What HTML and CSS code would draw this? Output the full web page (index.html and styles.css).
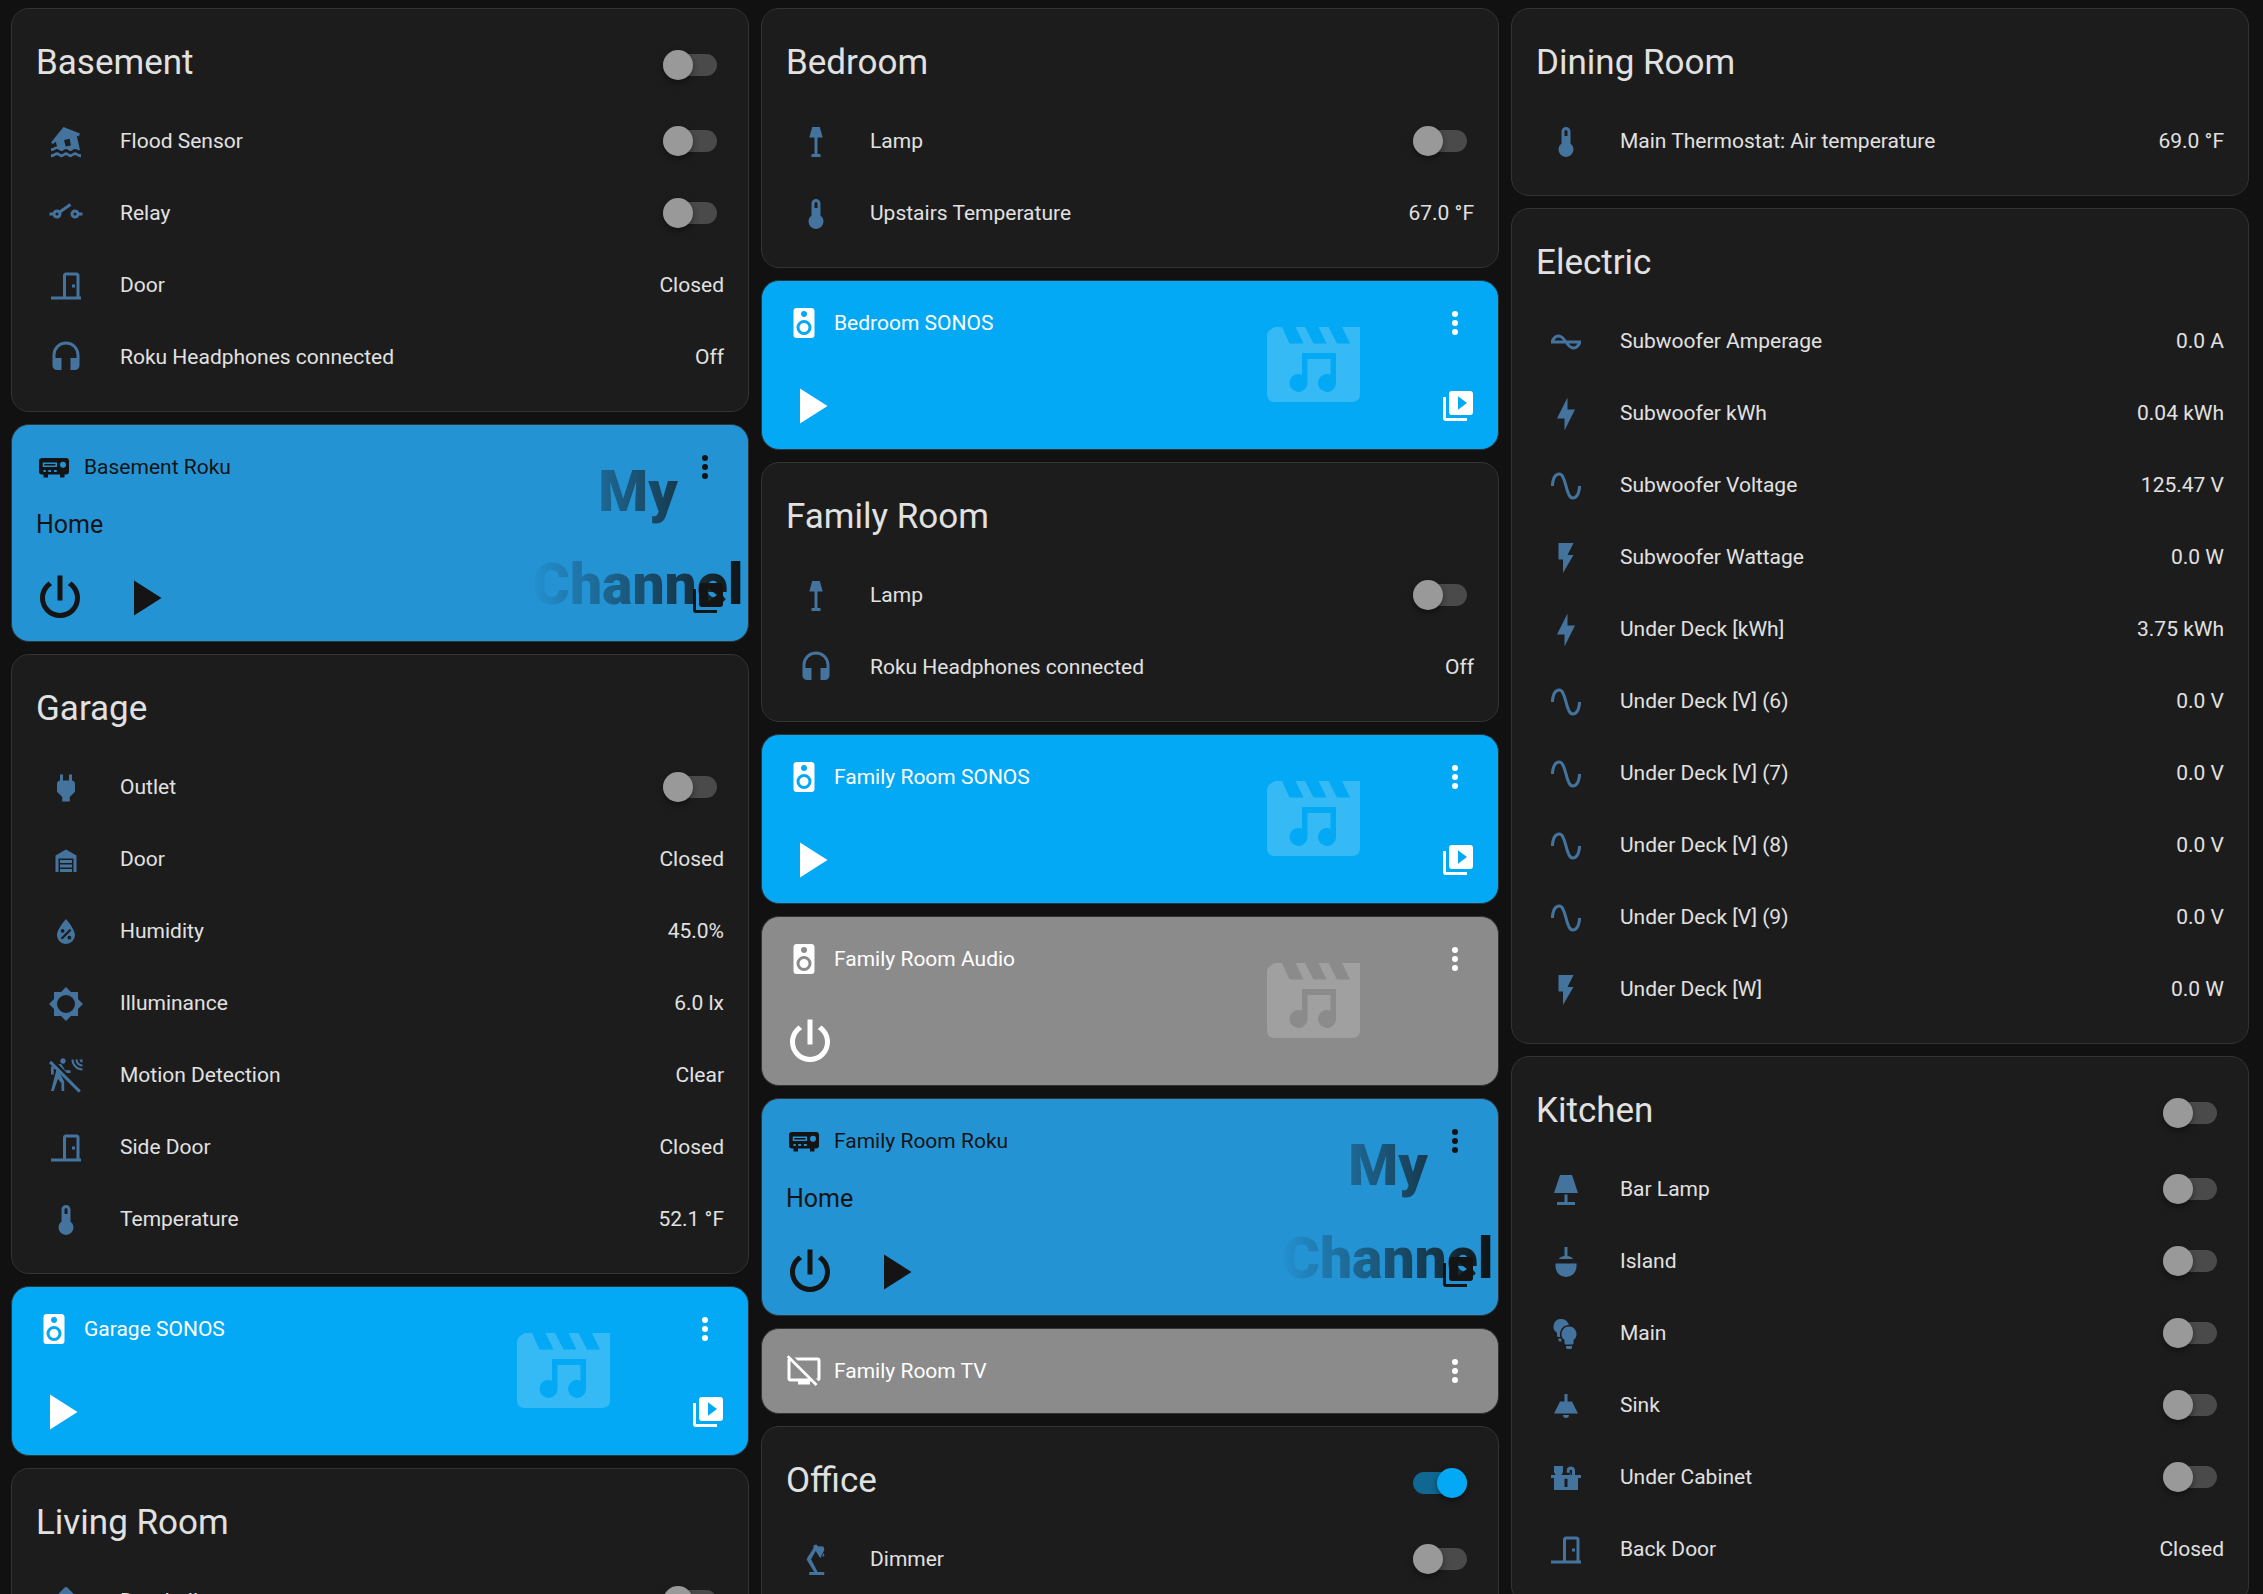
FILE: index.html
```html
<!DOCTYPE html>
<html lang="en">
<head>
<meta charset="utf-8">
<meta name="viewport" content="width=device-width, initial-scale=1">
<title>Overview</title>
<link rel="stylesheet" href="styles.css">
</head>
<body>
<svg class="sprite" aria-hidden="true">
  <symbol id="flood" viewBox="0 0 24 24"><path fill-rule="evenodd" d="M10.3 2L21.3 6.3L20.6 8.4L19.2 7.9L21.3 17.3C20.2 18 19.2 16.7 18 16.7S16 18 15 18S13 16.7 12 16.7S10 18 9 18S7 16.7 6 16.7S4 18.2 2 18V16.2C3.5 16.2 4.5 15 6 15L5.2 11.9L3.2 13.3L2 12.3ZM10.7 10.6L11.8 15L15.3 14.4L14.4 9.8Z"/><path d="M2 20.2C4 20.2 4.5 18.9 6 18.9S8 20.2 9 20.2S11 18.9 12 18.9S14 20.2 15 20.2S17 18.9 18 18.9S20 20.2 22 20.2V22.2C20 22.2 19.500 20.900 18 20.900S16 22.200 15 22.200S13 20.900 12 20.900S10 22.200 9 22.200S7 20.900 6 20.900S4 22.200 2 22.200Z"/></symbol>
  <symbol id="relay" viewBox="0 0 24 24"><path d="M1,11H3.17C3.58,9.83 4.69,9 6,9C6.65,9 7.25,9.21 7.74,9.56L14.44,4.87L15.58,6.5L8.89,11.2C8.96,11.45 9,11.72 9,12A3,3 0 0,1 6,15C4.69,15 3.58,14.17 3.17,13H1V11M23,11V13H20.83C20.42,14.17 19.31,15 18,15A3,3 0 0,1 15,12A3,3 0 0,1 18,9C19.31,9 20.42,9.83 20.83,11H23M6,11A1,1 0 0,0 5,12A1,1 0 0,0 6,13A1,1 0 0,0 7,12A1,1 0 0,0 6,11M18,11A1,1 0 0,0 17,12A1,1 0 0,0 18,13A1,1 0 0,0 19,12A1,1 0 0,0 18,11Z"/></symbol>
  <symbol id="door" viewBox="0 0 24 24"><path d="M16,11H18V13H16V11M12,3H19C20.11,3 21,3.89 21,5V19H22V21H2V19H10V5C10,3.89 10.89,3 12,3M12,5V19H19V5H12Z"/></symbol>
  <symbol id="headphones" viewBox="0 0 24 24"><path d="M12,1C7,1 3,5 3,10V17A3,3 0 0,0 6,20H9V12H5V10A7,7 0 0,1 12,3A7,7 0 0,1 19,10V12H15V20H18A3,3 0 0,0 21,17V10C21,5 16.97,1 12,1Z"/></symbol>
  <symbol id="plug" viewBox="0 0 24 24"><path d="M16,7V3H14V7H10V3H8V7H8C7,7 6,8 6,9V14.5L9.5,18V21H14.5V18L18,14.5V9C18,8 17,7 16,7Z"/></symbol>
  <symbol id="garage" viewBox="0 0 24 24"><path d="M19,20H17V11H7V20H5V9L12,5L19,9V20M8,12H16V14H8V12M8,15H16V17H8V15M16,18V20H8V18H16Z"/></symbol>
  <symbol id="humidity" viewBox="0 0 24 24"><path fill-rule="evenodd" d="M12,3.25C12,3.25 6,10 6,14C6,17.32 8.69,20 12,20A6,6 0 0,0 18,14C18,10 12,3.25 12,3.25M14.47,9.97L15.53,11.03L9.53,17.03L8.47,15.97M9.75,10A1.25,1.25 0 0,1 11,11.25A1.25,1.25 0 0,1 9.75,12.5A1.25,1.25 0 0,1 8.5,11.25A1.25,1.25 0 0,1 9.75,10M14.25,14.5A1.25,1.25 0 0,1 15.5,15.75A1.25,1.25 0 0,1 14.25,17A1.25,1.25 0 0,1 13,15.75A1.25,1.25 0 0,1 14.25,14.5Z"/></symbol>
  <symbol id="brightness" viewBox="0 0 24 24"><path d="M12,18A6,6 0 0,1 6,12A6,6 0 0,1 12,6A6,6 0 0,1 18,12A6,6 0 0,1 12,18M20,15.31L23.31,12L20,8.69V4H15.31L12,0.69L8.69,4H4V8.69L0.69,12L4,15.31V20H8.69L12,23.31L15.31,20H20V15.31Z"/></symbol>
  <symbol id="motion-off" viewBox="0 0 24 24"><path d="M10,0.2C9,0.2 8.2,1 8.2,2C8.2,3 9,3.8 10,3.8C11,3.8 11.8,3 11.8,2C11.8,1 11,0.2 10,0.2M15.67,1A7.33,7.33 0 0,0 23,8.33V7A6,6 0 0,1 17,1H15.67M18.33,1C18.33,3.58 20.42,5.67 23,5.67V4.33C21.16,4.33 19.67,2.84 19.67,1H18.33M21,1A2,2 0 0,0 23,3V1H21M7.92,4.03C7.75,4.03 7.58,4.06 7.42,4.11L2,5.8V11H3.8V7.33L5.91,6.67L2,22H3.8L6.67,13.89L9,17V22H10.8V15.59L8.31,11.05L9.04,8.18L10.12,10H15V8.2H11.38L9.38,4.87C9.08,4.37 8.54,4.03 7.92,4.03Z"/><path class="knockout" d="M3.400 2.200L22.600 21.400"/><path class="slash" d="M1.400 2.600L21.200 22.400"/></symbol>
  <symbol id="thermometer" viewBox="0 0 24 24"><path d="M15 13V5A3 3 0 0 0 9 5V13A5 5 0 1 0 15 13M12 4A1 1 0 0 1 13 5V8H11V5A1 1 0 0 1 12 4Z"/></symbol>
  <symbol id="floor-lamp" viewBox="0 0 24 24"><path d="M9.500 2H14.500L16.500 9H13V20H15V22H9V20H11V9H7.500Z"/></symbol>
  <symbol id="home" viewBox="0 0 24 24"><path d="M11.100 2.400Q12 1.600 12.900 2.400L22 11.500V13H20V20Q20 22 18 22H6Q4 22 4 20V13H2V11.500Z"/></symbol>
  <symbol id="current" viewBox="0 0 24 24"><path d="M12.43 11C12.28 10.84 10 7 7 7S2.32 10.18 2 11V13H11.57C11.72 13.16 14 17 17 17S21.68 13.82 22 13V11H12.43M7 9C8.17 9 9.18 9.85 10 11H4.31C4.78 10.17 5.54 9 7 9M17 15C15.83 15 14.82 14.15 14 13H19.69C19.22 13.83 18.46 15 17 15Z"/></symbol>
  <symbol id="bolt" viewBox="0 0 24 24"><path d="M11 15H6L13 1V9H18L11 23V15Z"/></symbol>
  <symbol id="sine" viewBox="0 0 24 24"><path d="M16.5,21C13.5,21 12.31,16.76 11.05,12.28C10.14,9.04 9,5 7.5,5C4.11,5 4,11.93 4,12H2C2,11.63 2.06,3 7.5,3C10.5,3 11.71,7.25 12.97,11.74C13.83,14.8 15,19 16.5,19C19.94,19 20.03,12.07 20.03,12H22.03C22.03,12.37 21.97,21 16.5,21Z"/></symbol>
  <symbol id="flash" viewBox="0 0 24 24"><path d="M7,2V13H10V22L17,10H13L17,2H7Z"/></symbol>
  <symbol id="lamp" viewBox="0 0 24 24"><path d="M8,2H16L20,14H4L8,2M11,15H13V20H18V22H6V20H11V15Z"/></symbol>
  <symbol id="pendant" viewBox="0 0 24 24"><path d="M11 2H13V8C14.500 8.100 16.200 8.800 16.700 10H7.300C7.800 8.800 9.500 8.100 11 8ZM5 13H19V15A7 7 0 0 1 5 15Z"/></symbol>
  <symbol id="bulbs" viewBox="0 0 24 24"><path d="M9 2A5 5 0 0 0 6 11.200V13Q6 14 7 14H9L14 7A5 5 0 0 0 9 2M7 15H9V17H8Q7 17 7 16Z"/><path class="ring" d="M14 7A5 5 0 0 1 17 16V18Q17 19 16 19H12Q11 19 11 18V16A5 5 0 0 1 14 7M12 20H16V21Q16 22 15 22H13Q12 22 12 21Z"/></symbol>
  <symbol id="ceiling" viewBox="0 0 24 24"><path d="M8,9H11V4H13V9H16L20,17H4L8,9M14,18A2,2 0 0,1 12,20A2,2 0 0,1 10,18H14Z"/></symbol>
  <symbol id="counter" viewBox="0 0 24 24"><path fill-rule="evenodd" d="M4 4H10V8L9 10H14.500V8.500H12.500V7A2.700 2.700 0 0 1 18 7V10H22V12H20V20H4V12H2V10H5L4 8ZM16 7A.8 .8 0 0 0 14.500 7V8.500H15V10H16ZM11 12.500V18H13V12.500Z"/></symbol>
  <symbol id="desk-lamp" viewBox="0 0 24 24"><path d="M10.400 2.200L12.300 1.700L13.200 2.800L17 3L17.600 5.200L14.800 10.900L11.800 6L8.700 11.500L13.100 20H17.500V22H7.500V20H10.800L6.500 13Q5.200 11.700 6.300 10.400L10.200 4.300ZM17.200 7.200L17.600 9L15.800 10.300Z"/></symbol>
  <symbol id="roku" viewBox="0 0 24 24"><path fill-rule="evenodd" d="M4 6H20A2 2 0 0 1 22 8V15A2 2 0 0 1 20 17H19V19H16V17H8V19H5V17H4A2 2 0 0 1 2 15V8A2 2 0 0 1 4 6M4.500 9V12H14V9ZM5.500 10H13V11H5.500ZM18 8.500A2 2 0 0 0 18 12.500A2 2 0 0 0 18 8.500M5 14V15.300H6.500V14ZM8.200 14V15.300H10V14ZM12 14V15.300H13.800V14Z"/></symbol>
  <symbol id="speaker" viewBox="0 0 24 24"><path d="M12,12A3,3 0 0,0 9,15A3,3 0 0,0 12,18A3,3 0 0,0 15,15A3,3 0 0,0 12,12M12,20A5,5 0 0,1 7,15A5,5 0 0,1 12,10A5,5 0 0,1 17,15A5,5 0 0,1 12,20M12,4A2,2 0 0,1 14,6A2,2 0 0,1 12,8C10.89,8 10,7.1 10,6C10,4.89 10.89,4 12,4M17,2H7C5.89,2 5,2.89 5,4V20A2,2 0 0,0 7,22H17A2,2 0 0,0 19,20V4C19,2.89 18.1,2 17,2Z"/></symbol>
  <symbol id="tv-off" viewBox="0 0 24 24"><path d="M0.5,2.77L1.78,1.5L21,20.72L19.73,22L16.73,19H16V21H8V19H3A2,2 0 0,1 1,17V5C1,4.5 1.17,4.07 1.46,3.73L0.5,2.77M21,17V5H7.82L5.82,3H21A2,2 0 0,1 23,5V17C23,17.85 22.45,18.59 21.7,18.87L19.82,17H21M3,17H14.73L3,5.27V17Z"/></symbol>
  <symbol id="dots" viewBox="0 0 24 24"><path d="M12,16A2,2 0 0,1 14,18A2,2 0 0,1 12,20A2,2 0 0,1 10,18A2,2 0 0,1 12,16M12,10A2,2 0 0,1 14,12A2,2 0 0,1 12,14A2,2 0 0,1 10,12A2,2 0 0,1 12,10M12,4A2,2 0 0,1 14,6A2,2 0 0,1 12,8A2,2 0 0,1 10,6A2,2 0 0,1 12,4Z"/></symbol>
  <symbol id="play" viewBox="0 0 24 24"><path d="M8,5.14V19.14L19,12.14V5.14Z M8,5.14L19,12.14Z" fill="none"/><path d="M8,5V19L19,12Z"/></symbol>
  <symbol id="power" viewBox="0 0 24 24"><path d="M16.56,5.44L15.11,6.89C16.84,7.94 18,9.83 18,12A6,6 0 0,1 12,18A6,6 0 0,1 6,12C6,9.83 7.16,7.94 8.88,6.88L7.44,5.44C5.36,6.88 4,9.28 4,12A8,8 0 0,0 12,20A8,8 0 0,0 20,12C20,9.28 18.64,6.88 16.56,5.44M13,3H11V13H13"/></symbol>
  <symbol id="browse" viewBox="0 0 24 24"><path d="M4,6H2V20A2,2 0 0,0 4,22H18V20H4V6M20,2H8A2,2 0 0,0 6,4V16A2,2 0 0,0 8,18H20A2,2 0 0,0 22,16V4A2,2 0 0,0 20,2M12,14.5V5.500L18,10L12,14.5Z"/></symbol>
  <symbol id="clapper" viewBox="0 0 93 75"><path fill-rule="evenodd" d="M8 0H15L22.500 16.500H36.500L28.500 0H38L46.500 16.500H59.500L51.500 0H61.500L70 16.500H83L75 0H93V67Q93 75 85 75H8Q0 75 0 67V8Q0 5 3 3T8 0M35 26V47.700A9 9 0 1 0 40.500 56.500V32H63.500V47.700A9 9 0 1 0 69 56.500V26Z"/></symbol>
</svg>

<main class="dashboard">
  <div class="column">
    <section class="card">
      <header class="card-header"><h2 id="basement">Basement</h2><input class="switch" type="checkbox" role="switch" aria-labelledby="basement"></header>
      <div class="rows">
        <div class="row"><svg class="icon"><use href="#flood"/></svg><label class="name" for="s1">Flood Sensor</label><input class="switch" id="s1" type="checkbox" role="switch"></div>
        <div class="row"><svg class="icon"><use href="#relay"/></svg><label class="name" for="s2">Relay</label><input class="switch" id="s2" type="checkbox" role="switch"></div>
        <div class="row"><svg class="icon"><use href="#door"/></svg><span class="name">Door</span><span class="state">Closed</span></div>
        <div class="row"><svg class="icon"><use href="#headphones"/></svg><span class="name">Roku Headphones connected</span><span class="state">Off</span></div>
      </div>
    </section>
    <section class="card media roku">
      <div class="artwork" aria-hidden="true">My<br>Channel</div>
      <header class="media-header"><svg class="icon"><use href="#roku"/></svg><h3>Basement Roku</h3><button class="more" type="button" aria-label="More info"><svg class="icon"><use href="#dots"/></svg></button></header>
      <p class="media-title">Home</p>
      <div class="controls"><button type="button" aria-label="Power"><svg class="icon-large"><use href="#power"/></svg></button><button type="button" aria-label="Play"><svg class="icon-large"><use href="#play"/></svg></button><button class="browse" type="button" aria-label="Browse media"><svg class="icon"><use href="#browse"/></svg></button></div>
    </section>
    <section class="card">
      <header class="card-header"><h2>Garage</h2></header>
      <div class="rows">
        <div class="row"><svg class="icon"><use href="#plug"/></svg><label class="name" for="s3">Outlet</label><input class="switch" id="s3" type="checkbox" role="switch"></div>
        <div class="row"><svg class="icon"><use href="#garage"/></svg><span class="name">Door</span><span class="state">Closed</span></div>
        <div class="row"><svg class="icon"><use href="#humidity"/></svg><span class="name">Humidity</span><span class="state">45.0%</span></div>
        <div class="row"><svg class="icon"><use href="#brightness"/></svg><span class="name">Illuminance</span><span class="state">6.0 lx</span></div>
        <div class="row"><svg class="icon"><use href="#motion-off"/></svg><span class="name">Motion Detection</span><span class="state">Clear</span></div>
        <div class="row"><svg class="icon"><use href="#door"/></svg><span class="name">Side Door</span><span class="state">Closed</span></div>
        <div class="row"><svg class="icon"><use href="#thermometer"/></svg><span class="name">Temperature</span><span class="state">52.1 °F</span></div>
      </div>
    </section>
    <section class="card media sonos">
      <svg class="placeholder" aria-hidden="true"><use href="#clapper"/></svg>
      <header class="media-header"><svg class="icon"><use href="#speaker"/></svg><h3>Garage SONOS</h3><button class="more" type="button" aria-label="More info"><svg class="icon"><use href="#dots"/></svg></button></header>
      <div class="controls"><button type="button" aria-label="Play"><svg class="icon-large"><use href="#play"/></svg></button><button class="browse" type="button" aria-label="Browse media"><svg class="icon"><use href="#browse"/></svg></button></div>
    </section>
    <section class="card">
      <header class="card-header"><h2>Living Room</h2></header>
      <div class="rows">
        <div class="row"><svg class="icon"><use href="#home"/></svg><label class="name" for="s4">Doorbell</label><input class="switch" id="s4" type="checkbox" role="switch"></div>
      </div>
    </section>
  </div>

  <div class="column">
    <section class="card">
      <header class="card-header"><h2>Bedroom</h2></header>
      <div class="rows">
        <div class="row"><svg class="icon"><use href="#floor-lamp"/></svg><label class="name" for="s5">Lamp</label><input class="switch" id="s5" type="checkbox" role="switch"></div>
        <div class="row"><svg class="icon"><use href="#thermometer"/></svg><span class="name">Upstairs Temperature</span><span class="state">67.0 °F</span></div>
      </div>
    </section>
    <section class="card media sonos">
      <svg class="placeholder" aria-hidden="true"><use href="#clapper"/></svg>
      <header class="media-header"><svg class="icon"><use href="#speaker"/></svg><h3>Bedroom SONOS</h3><button class="more" type="button" aria-label="More info"><svg class="icon"><use href="#dots"/></svg></button></header>
      <div class="controls"><button type="button" aria-label="Play"><svg class="icon-large"><use href="#play"/></svg></button><button class="browse" type="button" aria-label="Browse media"><svg class="icon"><use href="#browse"/></svg></button></div>
    </section>
    <section class="card">
      <header class="card-header"><h2>Family Room</h2></header>
      <div class="rows">
        <div class="row"><svg class="icon"><use href="#floor-lamp"/></svg><label class="name" for="s6">Lamp</label><input class="switch" id="s6" type="checkbox" role="switch"></div>
        <div class="row"><svg class="icon"><use href="#headphones"/></svg><span class="name">Roku Headphones connected</span><span class="state">Off</span></div>
      </div>
    </section>
    <section class="card media sonos">
      <svg class="placeholder" aria-hidden="true"><use href="#clapper"/></svg>
      <header class="media-header"><svg class="icon"><use href="#speaker"/></svg><h3>Family Room SONOS</h3><button class="more" type="button" aria-label="More info"><svg class="icon"><use href="#dots"/></svg></button></header>
      <div class="controls"><button type="button" aria-label="Play"><svg class="icon-large"><use href="#play"/></svg></button><button class="browse" type="button" aria-label="Browse media"><svg class="icon"><use href="#browse"/></svg></button></div>
    </section>
    <section class="card media off">
      <svg class="placeholder" aria-hidden="true"><use href="#clapper"/></svg>
      <header class="media-header"><svg class="icon"><use href="#speaker"/></svg><h3>Family Room Audio</h3><button class="more" type="button" aria-label="More info"><svg class="icon"><use href="#dots"/></svg></button></header>
      <div class="controls"><button type="button" aria-label="Power"><svg class="icon-large"><use href="#power"/></svg></button></div>
    </section>
    <section class="card media roku">
      <div class="artwork" aria-hidden="true">My<br>Channel</div>
      <header class="media-header"><svg class="icon"><use href="#roku"/></svg><h3>Family Room Roku</h3><button class="more" type="button" aria-label="More info"><svg class="icon"><use href="#dots"/></svg></button></header>
      <p class="media-title">Home</p>
      <div class="controls"><button type="button" aria-label="Power"><svg class="icon-large"><use href="#power"/></svg></button><button type="button" aria-label="Play"><svg class="icon-large"><use href="#play"/></svg></button><button class="browse" type="button" aria-label="Browse media"><svg class="icon"><use href="#browse"/></svg></button></div>
    </section>
    <section class="card media off compact">
      <header class="media-header"><svg class="icon"><use href="#tv-off"/></svg><h3>Family Room TV</h3><button class="more" type="button" aria-label="More info"><svg class="icon"><use href="#dots"/></svg></button></header>
    </section>
    <section class="card">
      <header class="card-header"><h2 id="office">Office</h2><input class="switch" type="checkbox" role="switch" aria-labelledby="office" checked></header>
      <div class="rows">
        <div class="row"><svg class="icon"><use href="#desk-lamp"/></svg><label class="name" for="s7">Dimmer</label><input class="switch" id="s7" type="checkbox" role="switch"></div>
      </div>
    </section>
  </div>

  <div class="column">
    <section class="card">
      <header class="card-header"><h2>Dining Room</h2></header>
      <div class="rows">
        <div class="row"><svg class="icon"><use href="#thermometer"/></svg><span class="name">Main Thermostat: Air temperature</span><span class="state">69.0 °F</span></div>
      </div>
    </section>
    <section class="card">
      <header class="card-header"><h2>Electric</h2></header>
      <div class="rows">
        <div class="row"><svg class="icon"><use href="#current"/></svg><span class="name">Subwoofer Amperage</span><span class="state">0.0 A</span></div>
        <div class="row"><svg class="icon"><use href="#bolt"/></svg><span class="name">Subwoofer kWh</span><span class="state">0.04 kWh</span></div>
        <div class="row"><svg class="icon"><use href="#sine"/></svg><span class="name">Subwoofer Voltage</span><span class="state">125.47 V</span></div>
        <div class="row"><svg class="icon"><use href="#flash"/></svg><span class="name">Subwoofer Wattage</span><span class="state">0.0 W</span></div>
        <div class="row"><svg class="icon"><use href="#bolt"/></svg><span class="name">Under Deck [kWh]</span><span class="state">3.75 kWh</span></div>
        <div class="row"><svg class="icon"><use href="#sine"/></svg><span class="name">Under Deck [V] (6)</span><span class="state">0.0 V</span></div>
        <div class="row"><svg class="icon"><use href="#sine"/></svg><span class="name">Under Deck [V] (7)</span><span class="state">0.0 V</span></div>
        <div class="row"><svg class="icon"><use href="#sine"/></svg><span class="name">Under Deck [V] (8)</span><span class="state">0.0 V</span></div>
        <div class="row"><svg class="icon"><use href="#sine"/></svg><span class="name">Under Deck [V] (9)</span><span class="state">0.0 V</span></div>
        <div class="row"><svg class="icon"><use href="#flash"/></svg><span class="name">Under Deck [W]</span><span class="state">0.0 W</span></div>
      </div>
    </section>
    <section class="card">
      <header class="card-header"><h2 id="kitchen">Kitchen</h2><input class="switch" type="checkbox" role="switch" aria-labelledby="kitchen"></header>
      <div class="rows">
        <div class="row"><svg class="icon"><use href="#lamp"/></svg><label class="name" for="s8">Bar Lamp</label><input class="switch" id="s8" type="checkbox" role="switch"></div>
        <div class="row"><svg class="icon"><use href="#pendant"/></svg><label class="name" for="s9">Island</label><input class="switch" id="s9" type="checkbox" role="switch"></div>
        <div class="row"><svg class="icon"><use href="#bulbs"/></svg><label class="name" for="s10">Main</label><input class="switch" id="s10" type="checkbox" role="switch"></div>
        <div class="row"><svg class="icon"><use href="#ceiling"/></svg><label class="name" for="s11">Sink</label><input class="switch" id="s11" type="checkbox" role="switch"></div>
        <div class="row"><svg class="icon"><use href="#counter"/></svg><label class="name" for="s12">Under Cabinet</label><input class="switch" id="s12" type="checkbox" role="switch"></div>
        <div class="row"><svg class="icon"><use href="#door"/></svg><span class="name">Back Door</span><span class="state">Closed</span></div>
      </div>
    </section>
  </div>
</main>
</body>
</html>
```

FILE: styles.css
```css
:root {
  --page: #111111;
  --card: #1c1c1c;
  --line: #333333;
  --text: #e1e1e1;
  --icon: #44739e;
  --accent: #03a9f4;
}

* { box-sizing: border-box; }

body {
  margin: 0;
  background: var(--page);
  color: var(--text);
  font-family: Roboto, "Noto Sans", sans-serif;
  font-size: 21px;
  line-height: 30px;
}

h2, h3, p { margin: 0; font-weight: 400; }

.sprite { display: none; }

.dashboard {
  display: grid;
  grid-template-columns: repeat(3, minmax(0, 1fr));
  gap: 12px;
  align-items: start;
  height: 100vh;
  padding: 8px 14px 0 11px;
  overflow-y: auto;
  scrollbar-width: none;
}

.column {
  display: flex;
  flex-direction: column;
  gap: 12px;
}

.card {
  position: relative;
  padding: 18px 24px 24px;
  border: 1px solid var(--line);
  border-radius: 18px;
  background: var(--card);
}

.card-header {
  display: flex;
  align-items: center;
  justify-content: space-between;
  height: 72px;
  margin-bottom: 12px;
}

.card-header h2 { font-size: 35px; line-height: 72px; }
.card-header .switch { margin-top: 4px; }

.rows {
  display: flex;
  flex-direction: column;
  gap: 12px;
}

.row {
  display: flex;
  align-items: center;
  height: 60px;
}

.icon {
  flex: none;
  display: block;
  width: 36px;
  height: 36px;
  fill: currentColor;
}

.icon-large {
  display: block;
  width: 60px;
  height: 60px;
  fill: currentColor;
}

.row .icon { margin: 2px 12px 0; color: var(--icon); }
.row .name { flex: 1; margin-left: 24px; }

.knockout { fill: none; stroke: var(--card); stroke-width: 2; }
.slash { fill: none; stroke: currentColor; stroke-width: 2; }
.ring { stroke: var(--card); stroke-width: 2; paint-order: stroke; }

.switch {
  appearance: none;
  display: grid;
  align-items: center;
  flex: none;
  width: 54px;
  height: 30px;
  margin: 0 7px 0 0;
  cursor: pointer;
}

.switch::before,
.switch::after { content: ""; grid-area: 1 / 1; }

.switch::before {
  height: 22px;
  border-radius: 11px;
  background: #4a4a4a;
}

.switch::after {
  width: 30px;
  height: 30px;
  border-radius: 50%;
  background: #999999;
  box-shadow: 0 3px 6px rgba(0, 0, 0, 0.4);
}

.switch:checked::before { background: #0f6792; }
.switch:checked::after { justify-self: end; background: var(--accent); }

.media {
  padding: 24px 24px 13px;
  overflow: hidden;
  color: #ffffff;
}

.media.compact { padding-bottom: 24px; }
.sonos { background: var(--accent); }
.off { background: #8b8b8b; }
.roku { background: #2493d4; color: #141414; }

.media-header {
  position: relative;
  display: flex;
  align-items: center;
  gap: 12px;
}

.media-header h3 { flex: 1; font-size: 21px; line-height: 30px; }

button {
  padding: 0;
  border: 0;
  background: none;
  color: inherit;
  cursor: pointer;
}

.more { margin-right: 1px; }

.media-title {
  margin-top: 22px;
  font-size: 25px;
  line-height: 36px;
}

.controls {
  position: relative;
  display: flex;
  align-items: center;
  gap: 24px;
  margin: 35px -2px 0 -6px;
}

.media-title + .controls { margin-top: 25px; }
.browse { margin-left: auto; }

.placeholder {
  position: absolute;
  top: 46px;
  right: 138px;
  width: 93px;
  height: 75px;
  fill: rgba(255, 255, 255, 0.2);
}

.off .placeholder { fill: rgba(255, 255, 255, 0.18); }

.artwork {
  position: absolute;
  top: 20px;
  right: 1px;
  width: 218px;
  background: linear-gradient(to right, rgba(17, 17, 17, 0), #111111);
  background-clip: text;
  color: transparent;
  font-size: 57px;
  font-weight: 900;
  line-height: 93px;
  text-align: center;
}
```
